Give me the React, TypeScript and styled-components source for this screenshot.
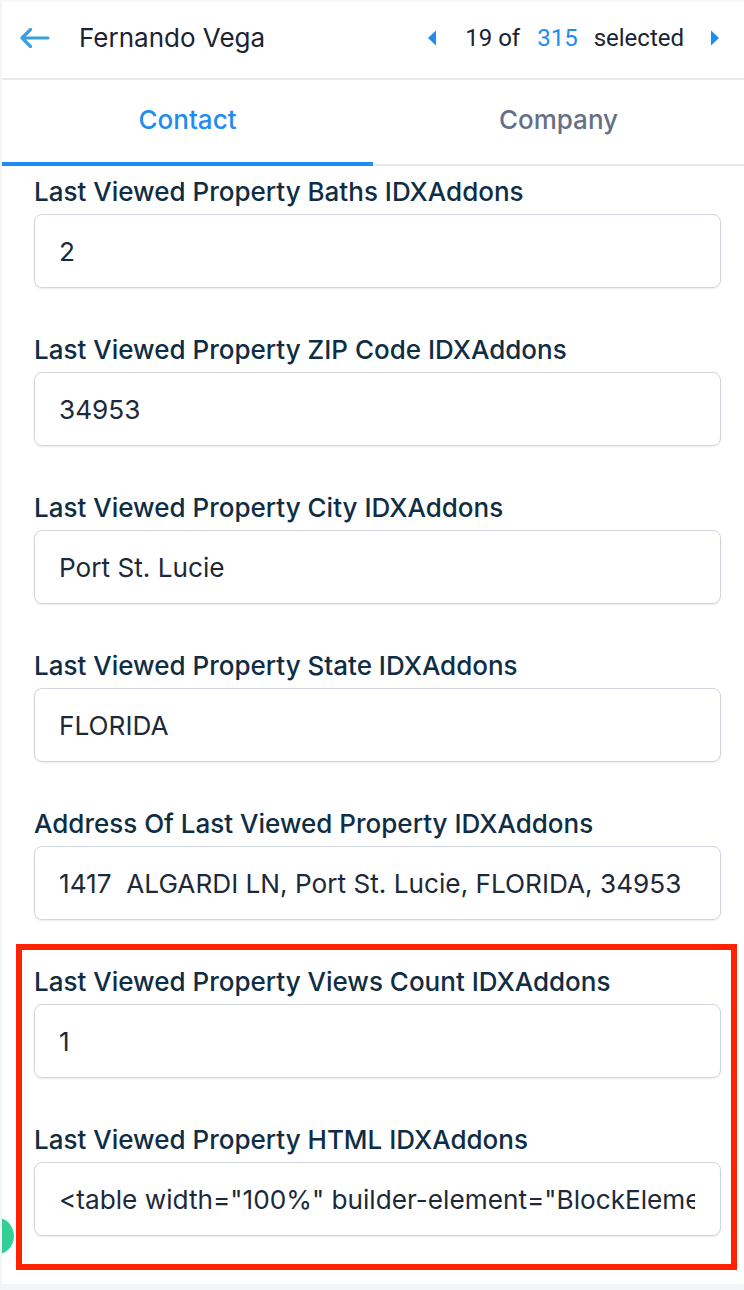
import React from "react";
import styled, { createGlobalStyle } from "styled-components";

const GlobalStyle = createGlobalStyle`
  html, body { margin: 0; padding: 0; }
  body {
    background: #f3f6f9;
    font-family: Inter, Roboto, "Noto Sans", "Liberation Sans", sans-serif;
    -webkit-font-smoothing: antialiased;
  }
`;

const Page = styled.div`
  position: relative;
  margin-left: 2px;
  width: 742px;
  height: 1284px;
  background: #ffffff;
  overflow: hidden;
`;

const Header = styled.header`
  height: 78px;
  border-bottom: 2px solid #e9e9ef;
  display: flex;
  align-items: center;
  padding: 0 24px 0 18px;
  box-shadow: inset 0 3px 3px -2px rgba(0, 0, 0, 0.05);
`;

const BackButton = styled.button`
  border: 0;
  background: none;
  padding: 0;
  width: 32px;
  height: 24px;
  display: flex;
  align-items: center;
  cursor: pointer;
  margin-top: -2px;
`;

const Name = styled.h1`
  margin: -3px 0 0 27px;
  font-size: 26px;
  font-weight: 400;
  color: #1a2233;
  flex: 1;
`;

const Pager = styled.div`
  display: flex;
  align-items: center;
  font-family: Roboto, "Liberation Sans", sans-serif;
  font-size: 24px;
  color: #1a2233;
  margin-top: -2px;
`;

const PagerText = styled.span<{ $blue?: boolean; $gap?: number }>`
  display: flex;
  align-items: center;
  color: ${(p) => (p.$blue ? "#1e8cf0" : "#1a2233")};
  margin-left: ${(p) => p.$gap ?? 0}px;
`;

const TabBar = styled.nav`
  display: flex;
  height: 84px;
  border-bottom: 2px solid #e9e9ef;
`;

const Tab = styled.div<{ $active?: boolean }>`
  flex: 1;
  display: flex;
  align-items: center;
  justify-content: center;
  font-size: 26px;
  font-weight: 500;
  color: ${(p) => (p.$active ? "#1e8cf0" : "#667085")};
  margin-bottom: -2px;
  border-bottom: 4px solid ${(p) => (p.$active ? "#1e8cf0" : "transparent")};
  padding-bottom: 4px;
`;

const Content = styled.main`
  padding: 12px 23px 0 32px;
`;

const Field = styled.div<{ $last?: boolean }>`
  margin-bottom: ${(p) => (p.$last ? 0 : 48)}px;
`;

const Label = styled.label`
  display: block;
  font-size: 26px;
  font-weight: 500;
  line-height: 28px;
  color: #0f2d44;
  margin-bottom: 8px;
  white-space: nowrap;
`;

const Input = styled.div`
  box-sizing: border-box;
  height: 74px;
  border: 1.5px solid #d0d5dd;
  border-radius: 8px;
  box-shadow: 0 1px 2px rgba(16, 24, 40, 0.08);
  display: flex;
  align-items: center;
  padding: 0 25px 0 24px;
  font-size: 26.2px;
  color: #1d2939;
`;

const Value = styled.span`
  flex: 1;
  min-width: 0;
  white-space: pre;
  overflow: hidden;
`;

const Highlight = styled.section`
  margin: -24px -16px 13px -18px;
  padding: 18px 10px 28px 12px;
  border: 6px solid #ff2200;
`;

const Dot = styled.div`
  position: absolute;
  left: -26px;
  top: 1217px;
  width: 38px;
  height: 38px;
  border-radius: 50%;
  background: #34cf97;
`;

const fields = [
  ["Last Viewed Property Baths IDXAddons", "2"],
  ["Last Viewed Property ZIP Code IDXAddons", "34953"],
  ["Last Viewed Property City IDXAddons", "Port St. Lucie"],
  ["Last Viewed Property State IDXAddons", "FLORIDA"],
  ["Address Of Last Viewed Property IDXAddons", "1417  ALGARDI LN, Port St. Lucie, FLORIDA, 34953"],
];

const highlighted = [
  ["Last Viewed Property Views Count IDXAddons", "1"],
  ["Last Viewed Property HTML IDXAddons", '<table width="100%" builder-element="BlockElement">'],
];

const Triangle = ({ dir }: { dir: "left" | "right" }) => (
  <svg width="10" height="16" viewBox="0 0 10 16">
    {dir === "left" ? (
      <path d="M9 0.5 L9 15.5 L1 8 Z" fill="#1e8cf0" />
    ) : (
      <path d="M1 0.5 L1 15.5 L9 8 Z" fill="#1e8cf0" />
    )}
  </svg>
);

export default function App() {
  return (
    <>
      <GlobalStyle />
      <Page>
        <Header>
          <BackButton aria-label="Back">
            <svg width="30" height="20" viewBox="0 0 30 20" fill="none">
              <path
                d="M2 10 H28 M10.5 1.5 L2 10 L10.5 18.5"
                stroke="#3b9fe0"
                strokeWidth="3.2"
                strokeLinecap="round"
                strokeLinejoin="round"
              />
            </svg>
          </BackButton>
          <Name>Fernando Vega</Name>
          <Pager>
            <Triangle dir="left" />
            <PagerText $gap={28}>19 of</PagerText>
            <PagerText $blue $gap={17}>315</PagerText>
            <PagerText $gap={16}>selected</PagerText>
            <PagerText $gap={26}>
              <Triangle dir="right" />
            </PagerText>
          </Pager>
        </Header>
        <TabBar>
          <Tab $active>Contact</Tab>
          <Tab>Company</Tab>
        </TabBar>
        <Content>
          {fields.map(([l, v]) => (
            <Field key={l}>
              <Label>{l}</Label>
              <Input>
                <Value>{v}</Value>
              </Input>
            </Field>
          ))}
          <Highlight>
            {highlighted.map(([l, v], i) => (
              <Field key={l} $last={i === highlighted.length - 1}>
                <Label>{l}</Label>
                <Input>
                  <Value>{v}</Value>
                </Input>
              </Field>
            ))}
          </Highlight>
        </Content>
        <Dot />
      </Page>
    </>
  );
}
